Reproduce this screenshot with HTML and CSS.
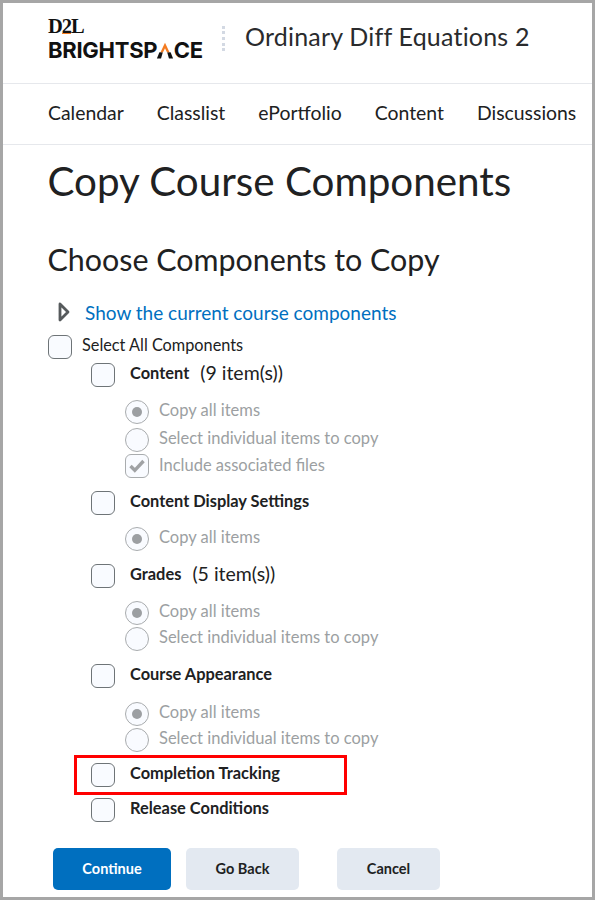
FILE: index.html
```html
<!DOCTYPE html>
<html lang="en">
<head>
<meta charset="utf-8">
<title>Copy Course Components</title>
<link rel="stylesheet" href="styles.css">
</head>
<body>
<div class="frame">
  <header class="header">
    <div class="logo">
      <div class="logo-d2l">D<span class="logo-two">2</span>L</div>
      <div class="logo-name">BRIGHTSP<svg class="logo-a" viewBox="0 0 20 18" aria-hidden="true"><path d="M1 18 L3.8 11 H7.6 L5.6 18Z" fill="#111"/><path d="M19 18 L16.2 11 H12.4 L14.4 18Z" fill="#111"/><path d="M10 0.5 L15 11 H12.2 L10 6.5 L7.8 11 H5Z" fill="#f47b20"/></svg>CE</div>
    </div>
    <div class="divider" aria-hidden="true"></div>
    <div class="course">Ordinary Diff Equations 2</div>
  </header>
  <nav class="nav">
    <a>Calendar</a><a>Classlist</a><a>ePortfolio</a><a>Content</a><a>Discussions</a>
  </nav>
  <main class="main">
    <h1 class="title">Copy Course Components</h1>
    <h2 class="subtitle">Choose Components to Copy</h2>
    <div class="show">
      <svg class="tri" viewBox="0 0 12 20" aria-hidden="true"><path d="M2 2 L10 10 L2 18Z" fill="none" stroke="#565a5c" stroke-width="2.8" stroke-linejoin="round"/></svg>
      <a class="link">Show the current course components</a>
    </div>
    <div class="row all"><span class="box"></span><span class="all-label">Select All Components</span></div>

    <div class="row comp h-content"><span class="box"></span><b>Content</b><span class="count">(9 item(s))</span></div>
    <div class="opts o-content">
      <div class="opt"><span class="radio on"></span><span class="opt-text">Copy all items</span></div>
      <div class="opt"><span class="radio"></span><span class="opt-text">Select individual items to copy</span></div>
      <div class="opt"><span class="box small"><svg viewBox="0 0 22 22" aria-hidden="true"><path d="M4.5 11 L8.8 15.3 L17.5 6" fill="none" stroke="#a0a2a4" stroke-width="3.4"/></svg></span><span class="opt-text tight">Include associated files</span></div>
    </div>

    <div class="row comp h-display"><span class="box"></span><b>Content Display Settings</b></div>
    <div class="opts o-display">
      <div class="opt"><span class="radio on"></span><span class="opt-text">Copy all items</span></div>
    </div>

    <div class="row comp h-grades"><span class="box"></span><b>Grades</b><span class="count">(5 item(s))</span></div>
    <div class="opts o-grades">
      <div class="opt"><span class="radio on"></span><span class="opt-text">Copy all items</span></div>
      <div class="opt"><span class="radio"></span><span class="opt-text">Select individual items to copy</span></div>
    </div>

    <div class="row comp h-appear"><span class="box"></span><b>Course Appearance</b></div>
    <div class="opts o-appear">
      <div class="opt"><span class="radio on"></span><span class="opt-text">Copy all items</span></div>
      <div class="opt"><span class="radio"></span><span class="opt-text">Select individual items to copy</span></div>
    </div>

    <div class="row comp h-track"><span class="box"></span><b>Completion Tracking</b><span class="highlight" aria-hidden="true"></span></div>
    <div class="row comp h-release"><span class="box"></span><b>Release Conditions</b></div>

    <div class="actions">
      <button class="btn primary">Continue</button>
      <button class="btn back">Go Back</button>
      <button class="btn cancel">Cancel</button>
    </div>
  </main>
</div>
</body>
</html>
```
FILE: styles.css
```css
* { box-sizing: border-box; }
html, body { margin: 0; padding: 0; }
body { width: 595px; height: 900px; overflow: hidden; background: #fff; font-family: Lato, "Open Sans", sans-serif; color: #202122; }
.frame { width: 595px; height: 900px; border: 3px solid #a6a6a6; background: #fff; overflow: hidden; }

.header { height: 81px; padding: 14px 0 0 45px; display: flex; align-items: flex-start; border-bottom: 1px solid #e6e8ec; }
.logo { width: 154px; }
.logo-d2l { font-family: "Liberation Serif", serif; font-weight: 700; font-size: 20.5px; line-height: 18px; color: #111; letter-spacing: -1.1px; }
.logo-two { border-bottom: 1px solid #f47b20; line-height: 13px; display: inline-block; }
.logo-name { font-family: Inter, "Liberation Sans", sans-serif; font-weight: 700; font-size: 22px; line-height: 20px; color: #111; letter-spacing: -0.28px; display: flex; align-items: flex-end; margin-top: 5px; white-space: nowrap; }
.logo-a { width: 18px; height: 17px; margin: 0 -0.5px 1px -1px; flex: none; }
.divider { width: 0; height: 25px; margin: 9px 0 0 20px; border-left: 3px dotted #d3d9e3; }
.course { font-size: 25px; line-height: 36px; margin: 1px 0 0 20px; color: #2a2b2d; letter-spacing: 0.2px; white-space: nowrap; }

.nav { height: 61px; display: flex; align-items: center; gap: 33px; padding: 0 0 4px 45px; border-bottom: 1px solid #e6e8ec; font-size: 19.4px; color: #202122; white-space: nowrap; }

.main { padding-left: 45px; }
.title { margin: 11px 0 0 -0.5px; font-weight: 400; font-size: 40.4px; line-height: 50px; color: #202122; }
.subtitle { margin: 33px 0 0 -0.5px; font-weight: 400; font-size: 30.4px; line-height: 40px; color: #202122; }
.show { display: flex; align-items: center; height: 28px; margin-top: 19px; padding-left: 10px; }
.tri { width: 12px; height: 20px; margin-right: 15px; flex: none; }
.link { color: #006fbf; font-size: 19px; }

.row { display: flex; align-items: center; white-space: nowrap; }
.box { width: 24px; height: 24px; flex: none; border: 1px solid #6e7477; border-radius: 6px; background: #f9fbff; display: inline-flex; }
.all { margin-top: 9px; height: 24px; font-size: 16.3px; }
.all-label { margin-left: 10px; margin-bottom: 5px; }
.comp { margin-left: 43px; height: 24px; position: relative; }
.comp b { margin-left: 15px; font-size: 16.4px; font-weight: 700; margin-bottom: 6px; }
.count { margin-left: 11px; font-size: 19.5px; margin-bottom: 6px; }

.opts { margin-left: 77px; color: #9c9fa2; font-size: 16.5px; }
.opt { display: flex; align-items: center; white-space: nowrap; margin-bottom: 2px; height: 24px; }
.o-content .opt:first-child { margin-bottom: 4px; }
.opt:last-child { margin-bottom: 0; }
.opt-text { margin-bottom: 5px; }
.opt-text.tight { margin-bottom: 3px; }
.radio { width: 24px; height: 24px; flex: none; margin-right: 10px; border: 1px solid #a9acae; border-radius: 50%; background: #f9fbff; position: relative; }
.radio.on::after { content: ""; position: absolute; left: 6px; top: 6px; width: 10px; height: 10px; border-radius: 50%; background: #9c9fa2; }
.box.small { margin-right: 10px; border-color: #a9acae; }
.box.small svg { width: 22px; height: 22px; }

.h-content { margin-top: 4px; }
.o-content { margin-top: 13px; }
.h-display { margin-top: 13px; }
.o-display { margin-top: 12px; }
.h-grades { margin-top: 13px; }
.o-grades { margin-top: 13px; }
.h-appear { margin-top: 13px; }
.o-appear { margin-top: 14px; }
.h-track { margin-top: 11px; }
.h-release { margin-top: 11px; }

.highlight { position: absolute; left: -17px; top: -8px; width: 273px; height: 40px; border: 3px solid #f00; pointer-events: none; }

.actions { display: flex; margin: 26px 0 0 5px; }
.btn { height: 42px; border: 0; border-radius: 5px; font-family: Lato, sans-serif; font-size: 14.5px; font-weight: 700; color: #202122; background: #e3e9f1; padding: 0 0 2px; }
.primary { width: 118px; background: #006fbf; color: #fff; }
.back { width: 113px; margin-left: 15px; }
.cancel { width: 103px; margin-left: 38px; }
```
